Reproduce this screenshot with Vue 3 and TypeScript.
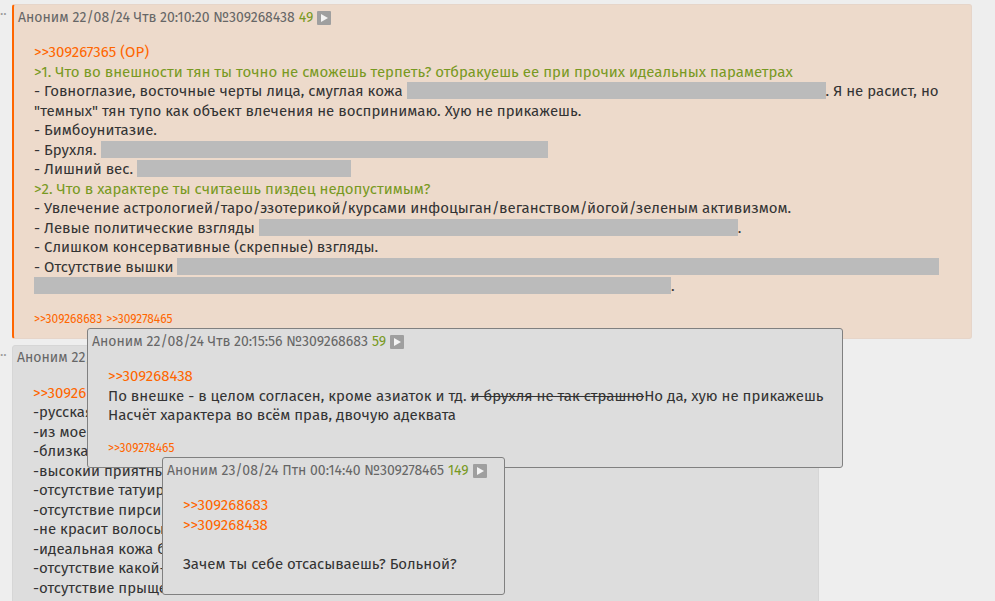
<script setup lang="ts">
type Part = { text?: string; kind?: 'text' | 'link' | 'quote' | 'strike' | 'redacted'; width?: number }
type Post = { id: string; date: string; order?: number; lines: Part[][]; replies: string[] }

const link = (text: string): Part => ({ text, kind: 'link' })
const quote = (text: string): Part => ({ text, kind: 'quote' })
const redacted = (width: number): Part => ({ kind: 'redacted', width })
const say = (text: string): Part => ({ text, kind: 'text' })

const first: Post = {
  id: '309268438',
  date: '22/08/24 Чтв 20:10:20',
  order: 49,
  lines: [
    [link('>>309267365 (OP)')],
    [quote('>1. Что во внешности тян ты точно не сможешь терпеть? отбракуешь ее при прочих идеальных параметрах')],
    [say('- Говноглазие, восточные черты лица, смуглая кожа '), redacted(419), say('. Я не расист, но')],
    [say('"темных" тян тупо как объект влечения не воспринимаю. Хую не прикажешь.')],
    [say('- Бимбоунитазие.')],
    [say('- Брухля. '), redacted(447)],
    [say('- Лишний вес. '), redacted(214)],
    [quote('>2. Что в характере ты считаешь пиздец недопустимым?')],
    [say('- Увлечение астрологией/таро/эзотерикой/курсами инфоцыган/веганством/йогой/зеленым активизмом.')],
    [say('- Левые политические взгляды '), redacted(479), say('.')],
    [say('- Слишком консервативные (скрепные) взгляды.')],
    [say('- Отсутствие вышки '), redacted(762)],
    [redacted(637), say('.')],
  ],
  replies: ['309268683', '309278465'],
}

const second: Post = {
  id: '',
  date: '22/',
  lines: [
    [link('>>30926')],
    [say('-русская')],
    [say('-из моей')],
    [say('-близка')],
    [say('-высокий приятны')],
    [say('-отсутствие татуир')],
    [say('-отсутствие пирсин')],
    [say('-не красит волосы')],
    [say('-идеальная кожа б')],
    [say('-отсутствие какой-')],
    [say('-отсутствие прыще')],
  ],
  replies: [],
}

const previews: Post[] = [
  {
    id: '309268683',
    date: '22/08/24 Чтв 20:15:56',
    order: 59,
    lines: [
      [link('>>309268438')],
      [
        say('По внешке - в целом согласен, кроме азиаток и тд. '),
        { text: 'и брухля не так страшно', kind: 'strike' },
        say('Но да, хую не прикажешь'),
      ],
      [say('Насчёт характера во всём прав, двочую адеквата')],
    ],
    replies: ['309278465'],
  },
  {
    id: '309278465',
    date: '23/08/24 Птн 00:14:40',
    order: 149,
    lines: [[link('>>309268683')], [link('>>309268438')], [], [say('Зачем ты себе отсасываешь? Больной?')]],
    replies: [],
  },
]

const entries = [
  { post: first, box: 'post marked' },
  { post: second, box: 'post plain' },
  { post: previews[0], box: 'post preview preview-outer' },
  { post: previews[1], box: 'post preview preview-inner' },
]
</script>

<template>
  <main class="thread">
    <div v-for="(entry, i) in entries" :key="i" :class="i < 2 ? 'row' : 'overlay'">
      <span v-if="i < 2" class="dots">..</span>
      <article :class="entry.box">
        <header class="head">
          <span>Аноним</span>
          <span>{{ entry.post.date }}<template v-if="entry.post.id"> №{{ entry.post.id }}</template></span>
          <span v-if="entry.post.order" class="order">{{ entry.post.order }}</span>
          <button v-if="entry.post.order" class="menu" type="button" aria-label="Меню поста">
            <svg viewBox="0 0 14 14" width="14" height="14" aria-hidden="true">
              <rect width="14" height="14" rx="1" fill="#9f9f9f" />
              <path d="M4 3 L11 7 L4 11 Z" fill="#f4f4f4" />
            </svg>
          </button>
        </header>
        <div class="body">
          <div v-for="(line, n) in entry.post.lines" :key="n" class="line">
            <template v-for="(part, k) in line" :key="k">
              <a v-if="part.kind === 'link'" href="#">{{ part.text }}</a>
              <span v-else-if="part.kind === 'redacted'" class="redacted" :style="{ width: part.width + 'px' }"></span>
              <s v-else-if="part.kind === 'strike'">{{ part.text }}</s>
              <span v-else :class="part.kind">{{ part.text }}</span>
            </template>
          </div>
        </div>
        <footer v-if="entry.post.replies.length" class="replies">
          <a v-for="reply in entry.post.replies" :key="reply" href="#">&gt;&gt;{{ reply }}</a>
        </footer>
      </article>
    </div>
  </main>
</template>

<style>
body {
  background: #eeeeee;
  overflow: hidden;
}
</style>

<style scoped>
.thread {
  position: relative;
  display: flex;
  flex-direction: column;
  gap: 6px;
  padding: 4px 23px 0 0;
  height: 100vh;
  box-sizing: border-box;
  overflow: hidden;
  color: #333333;
  font-family: "Fira Sans", Roboto, "Liberation Sans", sans-serif;
  font-size: 15px;
  line-height: 1.3;
}
.row {
  display: flex;
  flex: none;
}
.dots {
  flex: none;
  width: 12px;
  color: #999999;
  font-size: 14px;
  line-height: 14px;
}
.post {
  box-sizing: border-box;
  padding-top: 1px;
  background: #dddddd;
  border: 1px solid #d6d6d6;
  border-radius: 3px;
}
.marked {
  flex: 1;
  background: #eddacb;
  border-color: #e6d5c9;
  border-left: 2px solid #ff6600;
}
.plain {
  width: 83%;
}
.overlay {
  position: absolute;
}
.overlay:nth-child(3) {
  top: 328px;
  left: 87px;
}
.overlay:nth-child(4) {
  top: 457px;
  left: 162px;
}
.preview {
  border-color: #808080;
}
.preview-outer {
  width: 756px;
}
.preview-inner {
  width: 343px;
}
.head {
  display: flex;
  align-items: center;
  gap: 4px;
  height: 24px;
  padding-left: 4px;
  color: #666666;
  font-size: 14px;
}
.order {
  color: #789922;
}
.menu {
  display: flex;
  padding: 0;
  border: 0;
  background: none;
  cursor: pointer;
}
.body {
  padding: 13px 0 20px 20px;
}
.marked .body,
.preview-outer .body {
  padding-bottom: 14px;
}
.line {
  min-height: 1.3em;
  white-space: pre;
}
.redacted {
  display: inline-block;
  height: 17px;
  background: #bbbbbb;
  vertical-align: -3px;
}
.quote {
  color: #789922;
}
a {
  color: #ff6600;
  text-decoration: none;
}
.replies {
  display: flex;
  gap: 4px;
  padding: 0 0 11px 20px;
  font-size: 12px;
  line-height: 16px;
}
</style>
